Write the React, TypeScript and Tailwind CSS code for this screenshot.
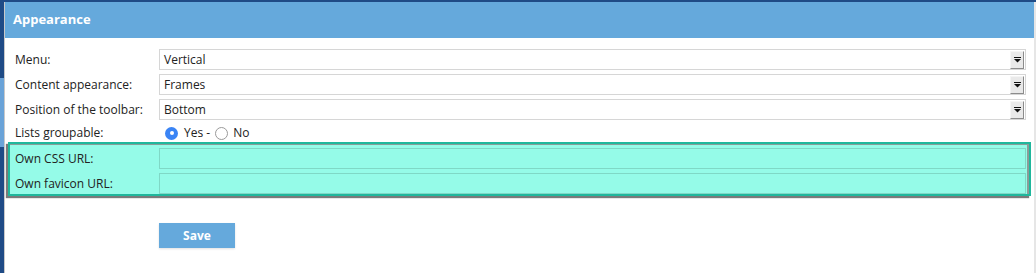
import React from "react";

const selects = [
  { label: "Menu:", value: "Vertical" },
  { label: "Content appearance:", value: "Frames" },
  { label: "Position of the toolbar:", value: "Bottom" },
];

function SelectBox({ value }: { value: string }) {
  return (
    <div className="flex h-[21px] flex-1 items-center border border-[#d6d6d6] bg-white pl-[4px] pr-[1px]">
      <span className="flex-1 text-[12px] text-[#222]">{value}</span>
      <div className="flex h-[18px] w-[14px] items-center justify-center border border-t-[#f4f4f4] border-l-[#f4f4f4] border-r-[#8c8c8c] border-b-[#8c8c8c] bg-[#e9e9e9]">
        <svg width="7" height="6" viewBox="0 0 7 6">
          <rect x="0" y="0" width="7" height="1" fill="#111" />
          <path d="M0 2 H7 L3.5 5.5 Z" fill="#111" />
        </svg>
      </div>
    </div>
  );
}

function Radio({ checked }: { checked: boolean }) {
  if (checked) {
    return (
      <span className="flex h-[13px] w-[13px] items-center justify-center rounded-full bg-[#3a84f5]">
        <span className="h-[4px] w-[4px] rounded-full bg-white" />
      </span>
    );
  }
  return <span className="h-[13px] w-[13px] rounded-full border border-[#9a9a9a] bg-white" />;
}

export default function App() {
  return (
    <div
      className="flex h-[273px] w-[1036px] flex-col bg-[#1f4b86] pt-[2px]"
      style={{ fontFamily: '"Open Sans", "Liberation Sans", sans-serif' }}
    >
      <div className="flex flex-1">
        <div className="flex w-[4px] flex-col">
          <div className="h-[76px] bg-[#1f4b86]" />
          <div className="h-[69px] bg-[#6aa3d8]" />
          <div className="flex-1 bg-[#1f4b86]" />
        </div>

        <div className="flex flex-1 flex-col border-l border-[#c9c9c9] bg-white">
          <div className="flex h-[36px] items-center bg-[#65a9dc] pl-[8px] text-[13px] font-bold text-white">
            Appearance
          </div>

          <div className="flex flex-col pt-[11px]">
            <div className="flex flex-col gap-[4px] pl-[10px] pr-[8px]">
              {selects.map((s) => (
                <div key={s.label} className="flex items-center">
                  <span className="w-[144px] text-[12px] text-[#222]">{s.label}</span>
                  <SelectBox value={s.value} />
                </div>
              ))}
            </div>

            <div className="mt-[4px] flex h-[18px] items-center pl-[10px]">
              <span className="w-[150px] text-[12px] text-[#222]">Lists groupable:</span>
              <Radio checked />
              <span className="ml-[6px] mr-[5px] text-[12px] text-[#222]">Yes -</span>
              <Radio checked={false} />
              <span className="ml-[5px] text-[12px] text-[#222]">No</span>
            </div>

            <div className="ml-[3px] mr-[3px] border-2 border-[#1fb79c] bg-[#95fbe8] shadow-[-2px_2px_1px_#7a7a7a]">
              <div className="flex flex-col gap-[4px] border-t border-r-2 border-[#8a9c98] pt-[3px] pr-[1px]">
                {["Own CSS URL:", "Own favicon URL:"].map((l) => (
                  <div key={l} className="flex items-center pl-[5px]">
                    <span className="w-[144px] text-[12px] text-[#222]">{l}</span>
                    <div className="h-[21px] flex-1 border border-[#7fd8c6]" />
                  </div>
                ))}
              </div>
            </div>

            <button className="ml-[154px] mt-[27px] flex h-[25px] w-[76px] items-center justify-center bg-[#65a9dc] text-[12px] font-bold text-white shadow-[0_1px_2px_rgba(0,0,0,0.12)]">
              Save
            </button>
          </div>
        </div>

        <div className="w-[2px] bg-[#e6e6e6]" />
      </div>
    </div>
  );
}
